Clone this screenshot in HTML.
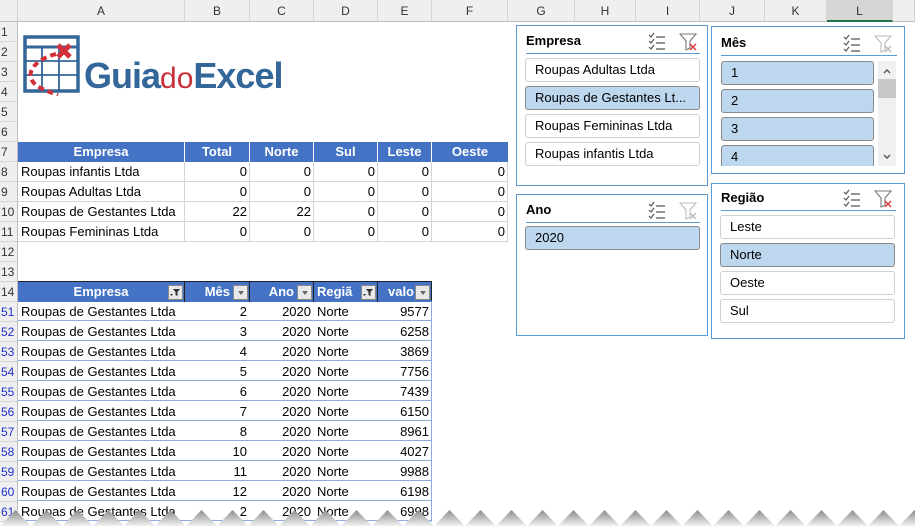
<!DOCTYPE html>
<html><head><meta charset="utf-8">
<style>
*{margin:0;padding:0;box-sizing:border-box}
body{width:915px;height:526px;overflow:hidden;background:#fff;position:relative;font-family:"Liberation Sans",sans-serif;font-size:13px;color:#000}
.a{position:absolute}
.vl{position:absolute;top:142px;width:1px;height:100px;background:#d4d4d4}
.ch{position:absolute;top:0;height:22px;background:#efefef;border-right:1px solid #d4d4d4;border-bottom:1px solid #bdbdbd;text-align:center;line-height:22px;color:#333;font-size:12px}
.rh{position:absolute;left:0;width:18px;height:20px;background:#efefef;border-bottom:1px solid #d4d4d4;border-right:1px solid #bdbdbd;text-align:left;padding-left:1px;line-height:20px;color:#333;font-size:12px}
.rh.b{color:#2030d0}
.c{position:absolute;height:20px;line-height:20px;white-space:nowrap;overflow:hidden;padding:0 3px}
.r{text-align:right}
.hd{background:#4472c4;color:#fff;font-weight:bold;text-align:center;border-right:1px solid #fff}
.dd{position:absolute;top:3px;right:1px;width:15px;height:15px;background:#e8e8e8;border:1px solid #888}
.dd::after{content:"";position:absolute;left:4px;top:5px;border-left:3px solid transparent;border-right:3px solid transparent;border-top:4px solid #666}
.df{position:absolute;top:3px;right:1px;width:15px;height:15px;background:#e8e8e8;border:1px solid #888}
.df svg{position:absolute;left:0;top:0}
.sl{position:absolute;border:1px solid #5b9bd5;background:#fff}
.st{position:absolute;left:9px;font-weight:bold;font-size:13px}
.su{position:absolute;left:9px;height:1px;background:#5b9bd5}
.it{position:absolute;height:24px;border:1px solid #d0d0d0;border-radius:3px;line-height:22px;padding-left:9px;background:#fff}
.it.s{background:#bdd7ee;border-color:#8a8a8a}
</style></head><body>

<!-- column headers -->
<div class="ch" style="left:0;width:18px"></div>
<div class="ch" style="left:18px;width:167px">A</div>
<div class="ch" style="left:185px;width:65px">B</div>
<div class="ch" style="left:250px;width:64px">C</div>
<div class="ch" style="left:314px;width:64px">D</div>
<div class="ch" style="left:378px;width:54px">E</div>
<div class="ch" style="left:432px;width:76px">F</div>
<div class="ch" style="left:508px;width:67px">G</div>
<div class="ch" style="left:575px;width:61px">H</div>
<div class="ch" style="left:636px;width:64px">I</div>
<div class="ch" style="left:700px;width:65px">J</div>
<div class="ch" style="left:765px;width:62px">K</div>
<div class="ch" style="left:827px;width:66px;background:#d6d6d6;border-bottom:2px solid #217346">L</div>
<div class="ch" style="left:893px;width:22px"></div>

<!-- row headers -->
<div class="rh" style="top:22px">1</div><div class="rh" style="top:42px">2</div><div class="rh" style="top:62px">3</div><div class="rh" style="top:82px">4</div><div class="rh" style="top:102px">5</div><div class="rh" style="top:122px">6</div><div class="rh" style="top:142px">7</div><div class="rh" style="top:162px">8</div><div class="rh" style="top:182px">9</div><div class="rh" style="top:202px">10</div><div class="rh" style="top:222px">11</div><div class="rh" style="top:242px">12</div><div class="rh" style="top:262px">13</div><div class="rh" style="top:282px">14</div>
<div class="rh b" style="top:302px">51</div><div class="rh b" style="top:322px">52</div><div class="rh b" style="top:342px">53</div><div class="rh b" style="top:362px">54</div><div class="rh b" style="top:382px">55</div><div class="rh b" style="top:402px">56</div><div class="rh b" style="top:422px">57</div><div class="rh b" style="top:442px">58</div><div class="rh b" style="top:462px">59</div><div class="rh b" style="top:482px">60</div><div class="rh b" style="top:502px">61</div>

<!-- logo -->
<svg class="a" style="left:22px;top:34px" width="62" height="62" viewBox="0 0 62 62">
<g fill="none" stroke="#336699">
<rect x="3" y="3" width="53" height="54" stroke-width="3.5"/>
<line x1="3" y1="13" x2="56" y2="13" stroke-width="3"/>
<line x1="3" y1="27" x2="56" y2="27" stroke-width="1.8"/>
<line x1="3" y1="41" x2="56" y2="41" stroke-width="1.8"/>
<line x1="20" y1="13" x2="20" y2="57" stroke-width="1.8"/>
<line x1="37" y1="13" x2="37" y2="57" stroke-width="1.8"/>
</g>
<path d="M34 20 C18 24 6 34 9 44 C11 52 22 56 36 61" fill="none" stroke="#d03038" stroke-width="4" stroke-dasharray="6 4"/>
<path d="M36 11 L48 23 M48 11 L36 23" stroke="#d03038" stroke-width="5"/>
</svg>
<div class="a" style="left:84px;top:54px;font-size:36px;font-weight:bold;color:#336699;letter-spacing:-1px;line-height:44px">Guia<span style="color:#c9303a;font-weight:normal;font-size:30px;letter-spacing:0">do</span>Excel</div>

<!-- table 1 grid -->
<div class="a" style="left:18px;top:142px;width:490px;height:100px;background:repeating-linear-gradient(to bottom,transparent 0,transparent 19px,#d4d4d4 19px,#d4d4d4 20px)"></div>
<div class="vl" style="left:184px"></div><div class="vl" style="left:249px"></div><div class="vl" style="left:313px"></div><div class="vl" style="left:377px"></div><div class="vl" style="left:431px"></div><div class="vl" style="left:507px"></div>

<div class="c hd" style="left:18px;top:142px;width:167px">Empresa</div>
<div class="c hd" style="left:185px;top:142px;width:65px">Total</div>
<div class="c hd" style="left:250px;top:142px;width:64px">Norte</div>
<div class="c hd" style="left:314px;top:142px;width:64px">Sul</div>
<div class="c hd" style="left:378px;top:142px;width:54px">Leste</div>
<div class="c hd" style="left:432px;top:142px;width:76px;border-right:0">Oeste</div>
<div class="c" style="left:18px;top:162px">Roupas infantis Ltda</div>
<div class="c" style="left:18px;top:182px">Roupas Adultas Ltda</div>
<div class="c" style="left:18px;top:202px">Roupas de Gestantes Ltda</div>
<div class="c" style="left:18px;top:222px">Roupas Femininas Ltda</div>
<div class="c r" style="left:185px;top:162px;width:65px">0</div><div class="c r" style="left:250px;top:162px;width:64px">0</div><div class="c r" style="left:314px;top:162px;width:64px">0</div><div class="c r" style="left:378px;top:162px;width:54px">0</div><div class="c r" style="left:432px;top:162px;width:76px">0</div>
<div class="c r" style="left:185px;top:182px;width:65px">0</div><div class="c r" style="left:250px;top:182px;width:64px">0</div><div class="c r" style="left:314px;top:182px;width:64px">0</div><div class="c r" style="left:378px;top:182px;width:54px">0</div><div class="c r" style="left:432px;top:182px;width:76px">0</div>
<div class="c r" style="left:185px;top:202px;width:65px">22</div><div class="c r" style="left:250px;top:202px;width:64px">22</div><div class="c r" style="left:314px;top:202px;width:64px">0</div><div class="c r" style="left:378px;top:202px;width:54px">0</div><div class="c r" style="left:432px;top:202px;width:76px">0</div>
<div class="c r" style="left:185px;top:222px;width:65px">0</div><div class="c r" style="left:250px;top:222px;width:64px">0</div><div class="c r" style="left:314px;top:222px;width:64px">0</div><div class="c r" style="left:378px;top:222px;width:54px">0</div><div class="c r" style="left:432px;top:222px;width:76px">0</div>

<!-- table 2 -->
<div class="a" style="left:18px;top:281px;width:414px;height:1px;background:#222"></div>
<div class="c hd" style="left:18px;top:282px;width:167px;border-right:1px solid #222">Empresa<span class="df"><svg width="13" height="13"><path d="M4 3h7l-2.5 3v4l-2-1V6z" fill="#333"/><path d="M1 8h3l-1.5 2z" fill="#333"/></svg></span></div>
<div class="c hd" style="left:185px;top:282px;width:65px;border-right:1px solid #222;text-align:right;padding-right:19px">Mês<span class="dd"></span></div>
<div class="c hd" style="left:250px;top:282px;width:64px;border-right:1px solid #222;text-align:right;padding-right:19px">Ano<span class="dd"></span></div>
<div class="c hd" style="left:314px;top:282px;width:64px;border-right:1px solid #222;text-align:left">Regiã<span class="df"><svg width="13" height="13"><path d="M4 3h7l-2.5 3v4l-2-1V6z" fill="#333"/><path d="M1 8h3l-1.5 2z" fill="#333"/></svg></span></div>
<div class="c hd" style="left:378px;top:282px;width:54px;border-right:1px solid #222;text-align:right;padding-right:17px">valo<span class="dd"></span></div>
<div class="a" style="left:18px;top:301px;width:414px;height:221px;border-right:1px solid #8ea9db;background:repeating-linear-gradient(to bottom,transparent 0,transparent 19px,#8ea9db 19px,#8ea9db 20px)"></div>

<div class="c" style="left:18px;top:302px">Roupas de Gestantes Ltda</div><div class="c r" style="left:185px;top:302px;width:65px">2</div><div class="c r" style="left:250px;top:302px;width:64px">2020</div><div class="c" style="left:314px;top:302px">Norte</div><div class="c r" style="left:378px;top:302px;width:54px">9577</div>
<div class="c" style="left:18px;top:322px">Roupas de Gestantes Ltda</div><div class="c r" style="left:185px;top:322px;width:65px">3</div><div class="c r" style="left:250px;top:322px;width:64px">2020</div><div class="c" style="left:314px;top:322px">Norte</div><div class="c r" style="left:378px;top:322px;width:54px">6258</div>
<div class="c" style="left:18px;top:342px">Roupas de Gestantes Ltda</div><div class="c r" style="left:185px;top:342px;width:65px">4</div><div class="c r" style="left:250px;top:342px;width:64px">2020</div><div class="c" style="left:314px;top:342px">Norte</div><div class="c r" style="left:378px;top:342px;width:54px">3869</div>
<div class="c" style="left:18px;top:362px">Roupas de Gestantes Ltda</div><div class="c r" style="left:185px;top:362px;width:65px">5</div><div class="c r" style="left:250px;top:362px;width:64px">2020</div><div class="c" style="left:314px;top:362px">Norte</div><div class="c r" style="left:378px;top:362px;width:54px">7756</div>
<div class="c" style="left:18px;top:382px">Roupas de Gestantes Ltda</div><div class="c r" style="left:185px;top:382px;width:65px">6</div><div class="c r" style="left:250px;top:382px;width:64px">2020</div><div class="c" style="left:314px;top:382px">Norte</div><div class="c r" style="left:378px;top:382px;width:54px">7439</div>
<div class="c" style="left:18px;top:402px">Roupas de Gestantes Ltda</div><div class="c r" style="left:185px;top:402px;width:65px">7</div><div class="c r" style="left:250px;top:402px;width:64px">2020</div><div class="c" style="left:314px;top:402px">Norte</div><div class="c r" style="left:378px;top:402px;width:54px">6150</div>
<div class="c" style="left:18px;top:422px">Roupas de Gestantes Ltda</div><div class="c r" style="left:185px;top:422px;width:65px">8</div><div class="c r" style="left:250px;top:422px;width:64px">2020</div><div class="c" style="left:314px;top:422px">Norte</div><div class="c r" style="left:378px;top:422px;width:54px">8961</div>
<div class="c" style="left:18px;top:442px">Roupas de Gestantes Ltda</div><div class="c r" style="left:185px;top:442px;width:65px">10</div><div class="c r" style="left:250px;top:442px;width:64px">2020</div><div class="c" style="left:314px;top:442px">Norte</div><div class="c r" style="left:378px;top:442px;width:54px">4027</div>
<div class="c" style="left:18px;top:462px">Roupas de Gestantes Ltda</div><div class="c r" style="left:185px;top:462px;width:65px">11</div><div class="c r" style="left:250px;top:462px;width:64px">2020</div><div class="c" style="left:314px;top:462px">Norte</div><div class="c r" style="left:378px;top:462px;width:54px">9988</div>
<div class="c" style="left:18px;top:482px">Roupas de Gestantes Ltda</div><div class="c r" style="left:185px;top:482px;width:65px">12</div><div class="c r" style="left:250px;top:482px;width:64px">2020</div><div class="c" style="left:314px;top:482px">Norte</div><div class="c r" style="left:378px;top:482px;width:54px">6198</div>
<div class="c" style="left:18px;top:502px">Roupas de Gestantes Ltda</div><div class="c r" style="left:185px;top:502px;width:65px">2</div><div class="c r" style="left:250px;top:502px;width:64px">2020</div><div class="c" style="left:314px;top:502px">Norte</div><div class="c r" style="left:378px;top:502px;width:54px">6998</div>

<!-- slicer icons -->
<svg width="0" height="0" style="position:absolute"><defs>
<g id="ms"><path d="M1 3l2 2 3-4M1 9l2 2 3-4M1 15l2 2 3-4" fill="none" stroke="#555" stroke-width="1.2"/><path d="M8 5h9M8 11h9M8 17h9" stroke="#555" stroke-width="1.2"/></g>
<g id="fx"><path d="M1 2h16l-6 7v7l-4 2v-9z" fill="none" stroke="#777" stroke-width="1.1"/><path d="M11 12l6 6M17 12l-6 6" stroke="#e0343c" stroke-width="1.4"/></g>
<g id="fd"><path d="M1 2h16l-6 7v7l-4 2v-9z" fill="none" stroke="#bbb" stroke-width="1.1"/><path d="M11 12l6 6M17 12l-6 6" stroke="#bbb" stroke-width="1.4"/></g>
</defs></svg>

<div class="sl" style="left:516px;top:25px;width:192px;height:161px">
<div class="st" style="top:7px">Empresa</div>
<svg class="a" style="left:131px;top:6px" width="20" height="20"><use href="#ms"/></svg>
<svg class="a" style="left:162px;top:6px" width="20" height="20"><use href="#fx"/></svg>
<div class="su" style="top:27px;width:174px"></div>
<div class="it" style="left:8px;top:32px;width:175px">Roupas Adultas Ltda</div>
<div class="it s" style="left:8px;top:60px;width:175px">Roupas de Gestantes Lt...</div>
<div class="it" style="left:8px;top:88px;width:175px">Roupas Femininas Ltda</div>
<div class="it" style="left:8px;top:116px;width:175px">Roupas infantis Ltda</div>
</div>

<div class="sl" style="left:516px;top:194px;width:192px;height:142px">
<div class="st" style="top:7px">Ano</div>
<svg class="a" style="left:131px;top:6px" width="20" height="20"><use href="#ms"/></svg>
<svg class="a" style="left:162px;top:6px" width="20" height="20"><use href="#fd"/></svg>
<div class="su" style="top:27px;width:174px"></div>
<div class="it s" style="left:8px;top:31px;width:175px">2020</div>
</div>

<div class="sl" style="left:711px;top:26px;width:194px;height:148px">
<div class="st" style="top:8px">Mês</div>
<svg class="a" style="left:131px;top:7px" width="20" height="20"><use href="#ms"/></svg>
<svg class="a" style="left:162px;top:7px" width="20" height="20"><use href="#fd"/></svg>
<div class="su" style="top:28px;width:176px"></div>
<div class="it s" style="left:9px;top:34px;width:153px">1</div>
<div class="it s" style="left:9px;top:62px;width:153px">2</div>
<div class="it s" style="left:9px;top:90px;width:153px">3</div>
<div class="it s" style="left:9px;top:118px;width:153px;height:21px;border-bottom:0;border-radius:3px 3px 0 0">4</div>
<div class="a" style="left:166px;top:34px;width:18px;height:105px;background:#f0f0f0"></div>
<div class="a" style="left:166px;top:52px;width:18px;height:19px;background:#c8c8c8"></div>
<svg class="a" style="left:166px;top:34px" width="18" height="105"><path d="M6 12l3-3 3 3M6 94l3 3 3-3" fill="none" stroke="#555" stroke-width="1.4"/></svg>
</div>

<div class="sl" style="left:711px;top:183px;width:194px;height:156px">
<div class="st" style="top:6px">Região</div>
<svg class="a" style="left:131px;top:5px" width="20" height="20"><use href="#ms"/></svg>
<svg class="a" style="left:162px;top:5px" width="20" height="20"><use href="#fx"/></svg>
<div class="su" style="top:26px;width:175px"></div>
<div class="it" style="left:8px;top:31px;width:175px">Leste</div>
<div class="it s" style="left:8px;top:59px;width:175px">Norte</div>
<div class="it" style="left:8px;top:87px;width:175px">Oeste</div>
<div class="it" style="left:8px;top:115px;width:175px">Sul</div>
</div>

<svg class="a" style="left:0;top:506px" width="915" height="20">
<defs><linearGradient id="g" x1="0" y1="0" x2="0" y2="1"><stop offset="0" stop-color="#8a8a8a"/><stop offset="1" stop-color="#f2f2f2"/></linearGradient>
<pattern id="p" width="31" height="20" patternUnits="userSpaceOnUse"><polygon points="0,20 15.5,4 31,20" fill="url(#g)"/></pattern></defs>
<rect x="0" y="0" width="915" height="20" fill="url(#p)"/>
</svg>
</body></html>
